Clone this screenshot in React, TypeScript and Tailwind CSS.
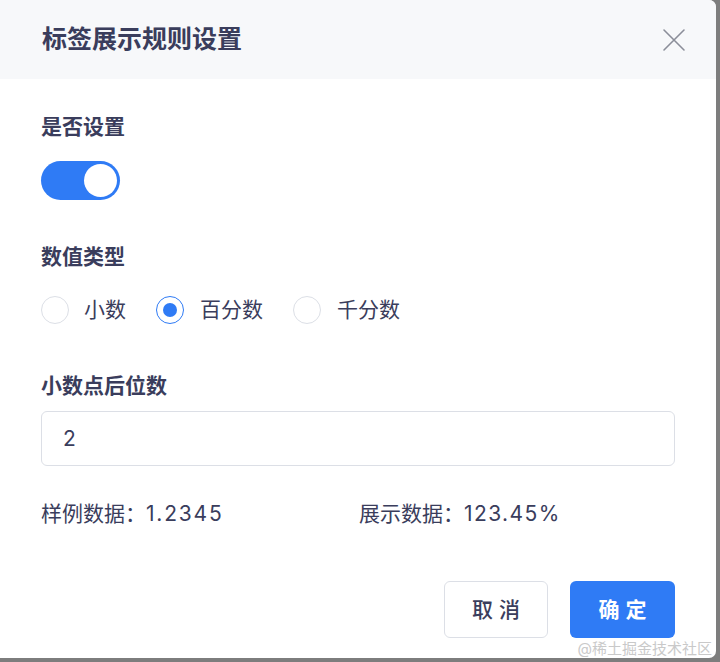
import React from "react";

const font = { fontFamily: '"Inter", "Noto Sans CJK SC", "Noto Sans", sans-serif' };

export default function App() {
  return (
    <div className="w-[720px] h-[662px] bg-[#7d7d7d] overflow-hidden" style={font}>
      <div className="relative w-[716px] h-[658px] bg-white rounded-r-[7px] overflow-hidden flex flex-col">
        <div className="h-[79px] bg-[#f7f8fa] flex items-center justify-between pl-[42px] pr-[30px]">
          <div className="text-[25px] font-bold text-[#3a3d5c]">标签展示规则设置</div>
          <svg width="24" height="24" viewBox="0 0 24 24" fill="none" stroke="#8b8e99" strokeWidth="1.6" strokeLinecap="round">
            <path d="M2 2 L22 22 M22 2 L2 22" />
          </svg>
        </div>
        <div className="px-[41px] flex flex-col text-[#3a3d5c]">
          <div className="mt-[34px] h-[28px] leading-[28px] text-[21px] font-semibold">是否设置</div>
          <div className="mt-[20px] w-[79px] h-[39px] rounded-full bg-[#2f7bf5] flex items-center justify-end pr-[3px]">
            <div className="w-[33px] h-[33px] rounded-full bg-white" />
          </div>
          <div className="mt-[43px] h-[28px] leading-[28px] text-[21px] font-semibold">数值类型</div>
          <div className="mt-[25px] h-[28px] flex items-center text-[21px]">
            <div className="flex items-center">
              <div className="w-[28px] h-[28px] rounded-full border border-[#dcdfe6] bg-white" />
              <span className="ml-[15px]">小数</span>
            </div>
            <div className="flex items-center ml-[30px]">
              <div className="w-[28px] h-[28px] rounded-full border border-[#2f7bf5] bg-white flex items-center justify-center">
                <div className="w-[14px] h-[14px] rounded-full bg-[#2f7bf5]" />
              </div>
              <span className="ml-[16px]">百分数</span>
            </div>
            <div className="flex items-center ml-[30px]">
              <div className="w-[28px] h-[28px] rounded-full border border-[#dcdfe6] bg-white" />
              <span className="ml-[16px]">千分数</span>
            </div>
          </div>
          <div className="mt-[48px] h-[28px] leading-[28px] text-[21px] font-semibold">小数点后位数</div>
          <div className="mt-[11px] h-[55px] rounded-[6px] border border-[#dcdfe6] flex items-center pl-[21px] text-[21px]">2</div>
          <div className="mt-[34px] h-[28px] flex items-center text-[21px]">
            <span className="w-[318px]">样例数据：<span className="tracking-[1.8px]">1.2345</span></span>
            <span>展示数据：<span className="tracking-[1.4px]">123.45%</span></span>
          </div>
          <div className="mt-[53px] flex justify-end gap-[22px]">
            <button className="w-[104px] h-[57px] rounded-[6px] border border-[#dcdfe6] bg-white text-[21px] font-medium text-[#3a3d5c] tracking-[6px] pl-[6px]">取消</button>
            <button className="w-[105px] h-[57px] rounded-[6px] bg-[#2f7bf5] text-[21px] font-semibold text-white tracking-[6px] pl-[6px]">确定</button>
          </div>
        </div>
        <div className="absolute right-[4px] bottom-[-2px] text-[15px] text-[#c9c9c9]">@稀土掘金技术社区</div>
      </div>
    </div>
  );
}
